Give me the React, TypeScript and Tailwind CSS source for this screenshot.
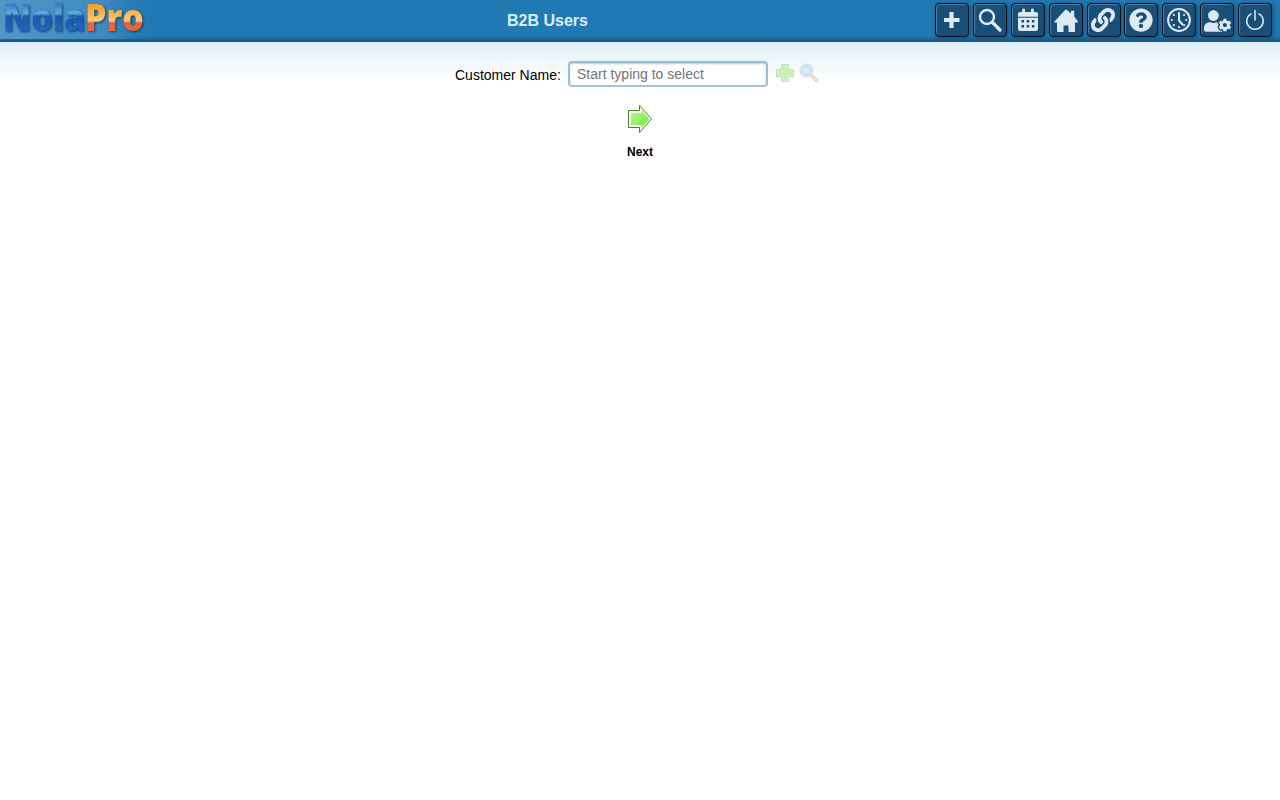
import { useState } from 'react'
import type { ReactNode } from 'react'
import { FaLink, FaQuestionCircle, FaUserCog } from 'react-icons/fa'

interface ToolbarItem {
  title: string
  icon: ReactNode
}

const clockMarks = [45, 90, 135, 180, 225, 270, 315]

function PlusIcon() {
  return (
    <svg className="w-4 h-4 mb-px" viewBox="0 0 16 16" fill="none" stroke="currentColor" strokeWidth={4.2}>
      <path d="M7.5 0v16M0 8h15.5" />
    </svg>
  )
}

function SearchIcon() {
  return (
    <svg className="w-6 h-6" viewBox="0 0 24 24" fill="none" stroke="currentColor">
      <circle cx="9" cy="9" r="7" strokeWidth={2.4} />
      <path d="M14.5 14.5L22 22" strokeWidth={3.2} strokeLinecap="round" />
    </svg>
  )
}

function CalendarIcon() {
  return (
    <svg className="w-[22px] h-6 mb-px" viewBox="0 0 22 24" fill="currentColor">
      <path d="M5.2 1.8q0-1.3 1.4-1.3T8 1.8V4h6V1.8q0-1.3 1.4-1.3t1.4 1.3V4H19q2 0 2 2v2.8H1V6q0-2 2-2h2.2z" />
      <path
        fillRule="evenodd"
        d="M1 9.8h20v11.2q0 2-2 2H3q-2 0-2-2zM4.5 12v2.500h2.500V12zm5.200 0v2.500h2.500V12zm5.200 0v2.500h2.500V12zM4.500 17v2.500h2.500V17zm5.200 0v2.500h2.500V17zm5.200 0v2.500h2.500V17z"
      />
    </svg>
  )
}

function HomeIcon() {
  return (
    <svg className="w-6 h-6 mt-px" viewBox="0 0 24 24" fill="currentColor">
      <path d="M11.3.8q.7-.6 1.4 0L17 4.6V1.8h3.2v5.7L24 12.5q.2 1-.7 1H21v8.7q0 .8-.8.8h-5.7v-6.5h-5V23H3.8q-.8 0-.8-.8v-8.7H.8q-1-.1-.4-1z" />
    </svg>
  )
}

function ClockIcon() {
  return (
    <svg className="w-6 h-6" viewBox="0 0 24 24" fill="none" stroke="currentColor">
      <circle cx="12" cy="12" r="10.9" strokeWidth={2} />
      <path d="M12 5v7.5l3.5 4" strokeWidth={2} strokeLinecap="round" />
      {clockMarks.map(angle => (
        <circle
          key={angle}
          cx="12"
          cy="4.8"
          r="1.1"
          fill="currentColor"
          stroke="none"
          transform={`rotate(${angle} 12 12)`}
        />
      ))}
    </svg>
  )
}

function PowerIcon() {
  return (
    <svg className="w-5 h-[22px] mb-px" viewBox="0 0 20 22" fill="none" stroke="currentColor" strokeWidth={1.5}>
      <path d="M6 4.9a8.2 8.2 0 1 0 8 0M10 1.5v9.5" strokeLinecap="round" />
    </svg>
  )
}

function Logo() {
  return (
    <svg className="block w-[160px] h-[42px] overflow-visible" viewBox="0 0 160 42">
      <defs>
        <linearGradient id="logo-glow">
          <stop offset="0" stopColor="#5297c8" />
          <stop offset="0.65" stopColor="#468fc3" stopOpacity="0.8" />
          <stop offset="1" stopColor="#2079b4" stopOpacity="0" />
        </linearGradient>
        <linearGradient id="logo-blue" gradientUnits="userSpaceOnUse" x1="0" y1="3" x2="0" y2="33">
          <stop offset="0" stopColor="#2875c6" />
          <stop offset="0.34" stopColor="#64ade3" />
          <stop offset="0.44" stopColor="#1a59b5" />
          <stop offset="1" stopColor="#2468bd" />
        </linearGradient>
        <linearGradient id="logo-orange" gradientUnits="userSpaceOnUse" x1="0" y1="3" x2="0" y2="33">
          <stop offset="0" stopColor="#f59a1b" />
          <stop offset="0.6" stopColor="#ffc978" />
          <stop offset="0.66" stopColor="#e66335" />
          <stop offset="1" stopColor="#ec6937" />
        </linearGradient>
      </defs>
      <rect width="160" height="39" fill="url(#logo-glow)" />
      <text
        x="3"
        y="31"
        textLength="141"
        lengthAdjust="spacingAndGlyphs"
        className="font-['Open_Sans',sans-serif] font-extrabold text-[37px] drop-shadow-[1px_1px_1px_#173c60]"
      >
        <tspan fill="url(#logo-blue)">Nola</tspan>
        <tspan fill="url(#logo-orange)">Pro</tspan>
      </text>
    </svg>
  )
}

function AddIcon() {
  return (
    <svg className="w-5 h-5" viewBox="0 0 20 20">
      <path d="M6.5 1.5h7v5h5v7h-5v5h-7v-5h-5v-7h5z" fill="#c6f2b1" stroke="#c2dcb8" />
      <path d="M7.5 2.5h5v5h5v5h-5v5h-5v-5h-5v-5h5z" fill="none" stroke="#d5f5c8" />
    </svg>
  )
}

function LookupIcon() {
  return (
    <svg className="w-5 h-5" viewBox="0 0 20 20" fill="none">
      <path d="M12.5 12.5l5 5" stroke="#e3d0b3" strokeWidth={3.2} strokeLinecap="round" />
      <path d="M12.5 12.5l5 5" stroke="#ffe5b8" strokeWidth={1.5} strokeLinecap="round" />
      <circle cx="7.5" cy="7.5" r="6.4" fill="#e9f1fa" stroke="#cbd6e6" />
      <circle cx="7.5" cy="7.5" r="4.3" fill="#d3effc" stroke="#b6cee5" />
    </svg>
  )
}

function NextIcon() {
  return (
    <svg className="w-[26px] h-[30px]" viewBox="0 0 26 30">
      <defs>
        <linearGradient id="next-fill" x1="0" y1="0" x2="1" y2="1">
          <stop offset="0" stopColor="#b9f58c" />
          <stop offset="0.5" stopColor="#96f066" />
          <stop offset="1" stopColor="#70df3c" />
        </linearGradient>
      </defs>
      <path d="M1.5 6.5h11v-5L24.5 15l-12 13.5v-5h-11z" fill="#f7fff2" stroke="#3f8427" />
      <path d="M4 9h10.5V5.5L22 15l-7.5 9v-3H4z" fill="url(#next-fill)" />
    </svg>
  )
}

const toolbar: ToolbarItem[] = [
  { title: 'Add', icon: <PlusIcon /> },
  { title: 'Search', icon: <SearchIcon /> },
  { title: 'Calendar', icon: <CalendarIcon /> },
  { title: 'Home', icon: <HomeIcon /> },
  { title: 'Links', icon: <FaLink className="w-6 h-6 mr-px" /> },
  { title: 'Help', icon: <FaQuestionCircle className="w-6 h-6" /> },
  { title: 'Time clock', icon: <ClockIcon /> },
  { title: 'User settings', icon: <FaUserCog className="w-[27px] h-[22px] mt-0.5" /> },
  { title: 'Log out', icon: <PowerIcon /> },
]

export default function App() {
  const [customer, setCustomer] = useState('')

  return (
    <div className="min-h-screen bg-white font-['Liberation_Sans',Arial,sans-serif] text-black">
      {/* Header */}
      <header className="flex h-[42px] bg-linear-to-b from-[#2179b4] from-85% to-[#145582]">
        <Logo />
        <h1 className="flex-1 text-center text-base font-bold leading-[41px] text-[#dceffc]">B2B Users</h1>
        <nav className="flex w-[337px] justify-between mr-2 pt-[3px]">
          {toolbar.map(item => (
            <button
              key={item.title}
              aria-label={item.title}
              className="flex w-[34px] h-[34px] items-center justify-center rounded-[4px] border border-[#03101c] bg-[#174f78] text-[#dfe9f3] shadow-[inset_1px_1px_1px_#527fa0,1px_1px_4px_#124d77]"
            >
              {item.icon}
            </button>
          ))}
        </nav>
      </header>

      {/* Customer lookup */}
      <main className="bg-linear-to-b from-[#e1eef8] to-white to-[38px]">
        <div className="flex items-start pt-[19px] pl-[455px]">
          <label htmlFor="customer" className="w-[113px] pt-1 text-sm leading-5">
            Customer Name:
          </label>
          <input
            id="customer"
            value={customer}
            onChange={e => setCustomer(e.target.value)}
            placeholder="Start typing to select"
            className="w-[200px] h-[26px] rounded-[4px] border-2 border-[#9bbdd3] border-b-[#acc1d0] bg-white px-[7px] pb-px text-sm shadow-[inset_0_1px_2px_#a9cee5] outline-none placeholder:text-[#757575]"
          />
          <div className="flex gap-1 pl-[7px] pt-[2px]">
            <AddIcon />
            <LookupIcon />
          </div>
        </div>

        <button className="flex flex-col items-center mx-auto mt-[17px] text-xs font-bold">
          <NextIcon />
          <span className="mt-[10px] leading-4">Next</span>
        </button>
      </main>
    </div>
  )
}
